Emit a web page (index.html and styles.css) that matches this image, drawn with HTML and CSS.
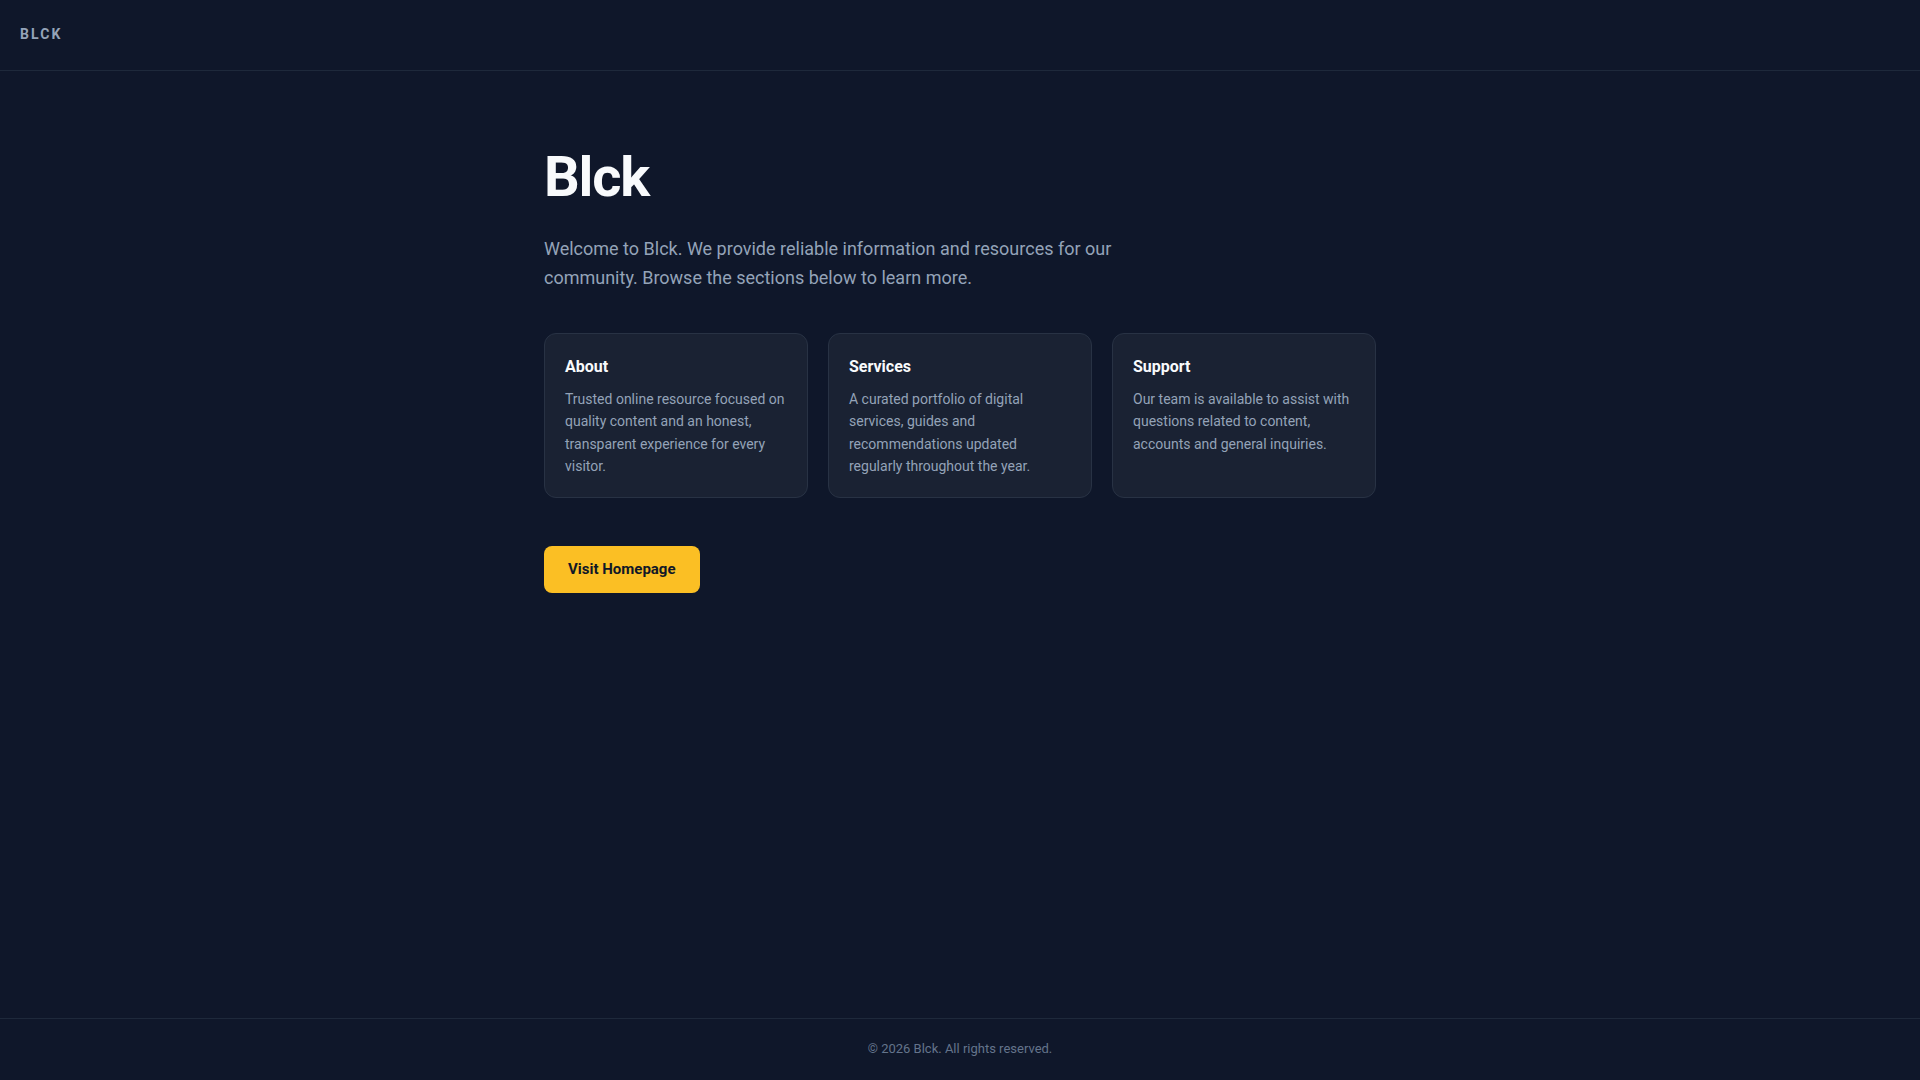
FILE: index.html
```html
<!DOCTYPE html>
<html lang="en">
<head>
<meta charset="utf-8">
<title>Blck</title>
<link rel="stylesheet" href="styles.css">
</head>
<body>
<div class="page">
  <header class="site-header">
    <span class="brand">BLCK</span>
  </header>
  <main class="main">
    <div class="container">
      <h1 class="title">Blck</h1>
      <p class="lead">Welcome to Blck. We provide reliable information and resources for our community. Browse the sections below to learn more.</p>
      <div class="cards">
        <section class="card">
          <h2 class="card-title">About</h2>
          <p class="card-text">Trusted online resource focused on quality content and an honest, transparent experience for every visitor.</p>
        </section>
        <section class="card">
          <h2 class="card-title">Services</h2>
          <p class="card-text">A curated portfolio of digital services, guides and recommendations updated regularly throughout the year.</p>
        </section>
        <section class="card">
          <h2 class="card-title">Support</h2>
          <p class="card-text">Our team is available to assist with questions related to content, accounts and general inquiries.</p>
        </section>
      </div>
      <a class="button" href="#">Visit Homepage</a>
    </div>
  </main>
  <footer class="site-footer">© 2026 Blck. All rights reserved.</footer>
</div>
</body>
</html>
```

FILE: styles.css
```css
* { box-sizing: border-box; }
html, body { margin: 0; padding: 0; }
body {
  background: #0f172a;
  color: #94a3b8;
  font-family: Roboto, "Liberation Sans", Arial, sans-serif;
}
.page {
  min-height: 100vh;
  display: flex;
  flex-direction: column;
}
.site-header {
  padding: 23px 20px 25px;
  line-height: 21px;
  border-bottom: 1px solid #1e293b;
}
.brand {
  font-size: 14px;
  font-weight: 700;
  letter-spacing: 0.15em;
  color: #94a3b8;
}
.main {
  flex: 1;
  padding: 76px 24px 40px;
}
.container {
  max-width: 832px;
  margin: 0 auto;
}
.title {
  margin: 0 0 25px;
  font-size: 56px;
  line-height: 1.1;
  font-weight: 700;
  color: #f8fafc;
  letter-spacing: -0.02em;
}
.lead {
  margin: 0 0 41px;
  max-width: 576px;
  font-size: 18px;
  line-height: 1.625;
  color: #94a3b8;
}
.cards {
  display: grid;
  grid-template-columns: repeat(3, 1fr);
  gap: 20px;
  margin-bottom: 48px;
}
.card {
  background: #1a2233;
  border: 1px solid #283244;
  border-radius: 12px;
  padding: 21px 20px 19px;
}
.card-title {
  margin: 0 0 9px;
  font-size: 16px;
  line-height: 24px;
  font-weight: 700;
  color: #f8fafc;
}
.card-text {
  margin: 0;
  font-size: 14px;
  line-height: 1.6;
  color: #94a3b8;
}
.button {
  display: inline-block;
  background: #fbbf24;
  color: #111827;
  text-decoration: none;
  font-size: 15px;
  font-weight: 700;
  line-height: 19px;
  padding: 14px 24px;
  border-radius: 8px;
}
.site-footer {
  border-top: 1px solid #1e293b;
  padding: 20px 20px 21px;
  text-align: center;
  font-size: 13px;
  line-height: 20px;
  color: #64748b;
}
```
